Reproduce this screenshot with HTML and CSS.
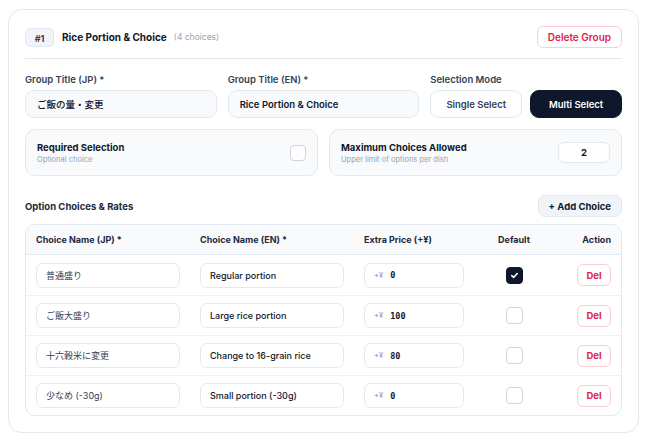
FILE: index.html
```html
<!DOCTYPE html>
<html lang="ja">
  <head>
    <meta charset="utf-8">
    <title>Option Group Editor</title>
    <link rel="stylesheet" href="styles.css">
  </head>
  <body>
    <div class="groupCard">

      <!-- group header -->
      <div class="groupHead">
        <div class="headLeft">
          <span class="badge">#1</span>
          <span class="groupName">Rice Portion &amp; Choice</span>
          <span class="groupCount">(4 choices)</span>
        </div>
        <button class="btnDanger">Delete Group</button>
      </div>

      <!-- titles + mode -->
      <div class="fieldRow">
        <div class="field">
          <label class="fieldLabel">Group Title (JP) *</label>
          <div class="textBox jpBold">ご飯の量・変更</div>
        </div>
        <div class="field">
          <label class="fieldLabel">Group Title (EN) *</label>
          <div class="textBox">Rice Portion &amp; Choice</div>
        </div>
        <div class="field">
          <label class="fieldLabel">Selection Mode</label>
          <div class="modeSwitch">
            <button class="modeBtn">Single Select</button>
            <button class="modeBtn active">Multi Select</button>
          </div>
        </div>
      </div>

      <div class="settingRow">
        <div class="settingCard">
          <div>
            <div class="settingTitle">Required Selection</div>
            <div class="settingSub">Optional choice</div>
          </div>
          <span class="check"></span>
        </div>
        <div class="settingCard">
          <div>
            <div class="settingTitle">Maximum Choices Allowed</div>
            <div class="settingSub">Upper limit of options per dish</div>
          </div>
          <div class="numBox">2</div>
        </div>
      </div>

      <div class="sectionHead">
        <span class="sectionTitle">Option Choices &amp; Rates</span>
        <button class="btnSoft">+ Add Choice</button>
      </div>

      <!-- choices table -->
      <div class="choiceTable">
        <div class="choiceRow headRow">
          <div class="cell">Choice Name (JP) *</div>
          <div class="cell">Choice Name (EN) *</div>
          <div class="cell">Extra Price (+¥)</div>
          <div class="cell center">Default</div>
          <div class="cell right">Action</div>
        </div>

        <div class="choiceRow">
          <div class="cell"><div class="cellBox jp">普通盛り</div></div>
          <div class="cell"><div class="cellBox">Regular portion</div></div>
          <div class="cell"><div class="cellBox price"><span class="yen">+¥</span><span class="amount">0</span></div></div>
          <div class="cell center"><span class="check big checked"><svg width="9" height="9" viewBox="0 0 10 10"><path d="M2 5.2l2 2 4-4.4" fill="none" stroke="#fff" stroke-width="1.8" stroke-linecap="round" stroke-linejoin="round"/></svg></span></div>
          <div class="cell right"><button class="btnDel">Del</button></div>
        </div>

        <div class="choiceRow">
          <div class="cell"><div class="cellBox jp">ご飯大盛り</div></div>
          <div class="cell"><div class="cellBox">Large rice portion</div></div>
          <div class="cell"><div class="cellBox price"><span class="yen">+¥</span><span class="amount">100</span></div></div>
          <div class="cell center"><span class="check big"></span></div>
          <div class="cell right"><button class="btnDel">Del</button></div>
        </div>

        <div class="choiceRow">
          <div class="cell"><div class="cellBox jp">十六穀米に変更</div></div>
          <div class="cell"><div class="cellBox">Change to 16-grain rice</div></div>
          <div class="cell"><div class="cellBox price"><span class="yen">+¥</span><span class="amount">80</span></div></div>
          <div class="cell center"><span class="check big"></span></div>
          <div class="cell right"><button class="btnDel">Del</button></div>
        </div>

        <div class="choiceRow">
          <div class="cell"><div class="cellBox jp">少なめ (-30g)</div></div>
          <div class="cell"><div class="cellBox">Small portion (-30g)</div></div>
          <div class="cell"><div class="cellBox price"><span class="yen">+¥</span><span class="amount">0</span></div></div>
          <div class="cell center"><span class="check big"></span></div>
          <div class="cell right"><button class="btnDel">Del</button></div>
        </div>
      </div>

    </div>
  </body>
</html>
```

FILE: styles.css
```css
body {
  margin: 9px 8px;
  background-color: #ffffff;
  font-family: Inter, "Noto Sans CJK JP", sans-serif;
  color: #0f172a;
}

button {
  font-family: inherit;
  cursor: pointer;
}

.groupCard {
  border: 1px solid #e2e8f0;
  border-radius: 14px;
  padding: 16px;
  box-shadow: 0 1px 2px rgba(15, 23, 42, 0.04);
}

/* header */

.groupHead {
  display: flex;
  align-items: center;
  justify-content: space-between;
  padding-bottom: 10px;
  border-bottom: 1px solid #e2e8f0;
}

.headLeft {
  display: flex;
  align-items: center;
}

.badge {
  display: inline-block;
  width: 29px;
  height: 19px;
  line-height: 19px;
  text-align: center;
  box-sizing: border-box;
  background-color: #f1f5f9;
  border: 1px solid #e2e8f0;
  border-radius: 5px;
  font-size: 9px;
  font-weight: 700;
  color: #334155;
  margin-right: 8px;
}

.groupName {
  font-size: 10px;
  font-weight: 700;
  color: #0f172a;
}

.groupCount {
  font-size: 8.5px;
  color: #94a3b8;
  margin-left: 7px;
}

.btnDanger {
  height: 22px;
  padding: 0 10px;
  background-color: #fff;
  border: 1px solid #fecdd3;
  border-radius: 6px;
  color: #e11d48;
  font-size: 10px;
  font-weight: 600;
}

/* fields */

.fieldRow {
  display: grid;
  grid-template-columns: 1fr 1fr 1fr;
  gap: 11px;
  margin-top: 15px;
}

.fieldLabel {
  display: block;
  font-size: 9.5px;
  font-weight: 600;
  color: #334155;
  margin-bottom: 4px;
  line-height: 12px;
}

.textBox {
  height: 28px;
  box-sizing: border-box;
  display: flex;
  align-items: center;
  padding: 0 11px;
  background-color: #f8fafc;
  border: 1px solid #e2e8f0;
  border-radius: 9px;
  font-size: 9.5px;
  font-weight: 600;
  color: #0f172a;
}

.jpBold {
  font-weight: 500;
}

.modeSwitch {
  display: flex;
  gap: 8px;
}

.modeBtn {
  flex: 1;
  height: 28px;
  background-color: #fff;
  border: 1px solid #e2e8f0;
  border-radius: 9px;
  font-size: 9.5px;
  font-weight: 600;
  color: #334155;
}

.modeBtn.active {
  background-color: #0f172a;
  border-color: #0f172a;
  color: #fff;
}

/* settings */

.settingRow {
  display: grid;
  grid-template-columns: 1fr 1fr;
  gap: 11px;
  margin-top: 11px;
}

.settingCard {
  height: 47px;
  box-sizing: border-box;
  display: flex;
  align-items: center;
  justify-content: space-between;
  padding: 0 11px;
  background-color: #f8fafc;
  border: 1px solid #e2e8f0;
  border-radius: 10px;
}

.settingTitle {
  font-size: 9.5px;
  font-weight: 700;
  color: #0f172a;
  line-height: 13px;
}

.settingSub {
  font-size: 7.5px;
  color: #94a3b8;
  line-height: 11px;
}

.check {
  display: inline-flex;
  align-items: center;
  justify-content: center;
  width: 16px;
  height: 16px;
  box-sizing: border-box;
  border: 1px solid #cbd5e1;
  border-radius: 4px;
  background-color: #fff;
}

.check.big {
  width: 17px;
  height: 17px;
}

.check.checked {
  background-color: #0f172a;
  border-color: #0f172a;
}

.numBox {
  width: 52px;
  height: 21px;
  box-sizing: border-box;
  line-height: 19px;
  text-align: center;
  background-color: #fff;
  border: 1px solid #e2e8f0;
  border-radius: 6px;
  font-size: 9.5px;
  font-weight: 700;
}

/* choices */

.sectionHead {
  display: flex;
  align-items: center;
  justify-content: space-between;
  margin-top: 19px;
}

.sectionTitle {
  font-size: 9.5px;
  font-weight: 700;
  color: #1e293b;
}

.btnSoft {
  height: 22px;
  padding: 0 10px;
  background-color: #f1f5f9;
  border: 1px solid #e2e8f0;
  border-radius: 7px;
  font-size: 9.5px;
  font-weight: 700;
  color: #0f172a;
}

.choiceTable {
  margin-top: 7px;
  border: 1px solid #e2e8f0;
  border-radius: 10px;
  overflow: hidden;
}

.choiceRow {
  display: grid;
  grid-template-columns: 164px 164px 120px 80px 1fr;
  align-items: center;
  height: 40px;
  box-sizing: border-box;
  border-top: 1px solid #eef2f6;
}

.headRow {
  height: 30px;
  border-top: none;
  background-color: #f8fafc;
  border-bottom: 1px solid #e2e8f0;
  font-size: 9px;
  font-weight: 700;
  color: #1e293b;
}

.headRow + .choiceRow {
  border-top: none;
}

.cell {
  padding: 0 10px;
  display: flex;
  align-items: center;
}

.cell.center {
  justify-content: center;
}

.cell.right {
  justify-content: flex-end;
}

.cellBox {
  flex: 1;
  height: 25px;
  box-sizing: border-box;
  display: flex;
  align-items: center;
  padding: 0 9px;
  background-color: #fff;
  border: 1px solid #e2e8f0;
  border-radius: 7px;
  font-size: 9px;
  font-weight: 500;
  color: #0f172a;
}

.cellBox.jp {
  font-weight: 400;
  color: #334155;
}

.yen {
  font-size: 7.5px;
  color: #94a3b8;
  margin-right: 7px;
}

.amount {
  font-family: "DejaVu Sans Mono", monospace;
  font-size: 8.5px;
  font-weight: 700;
  color: #0f172a;
}

.btnDel {
  width: 34px;
  height: 22px;
  padding: 0;
  background-color: #fff;
  border: 1px solid #fecdd3;
  border-radius: 6px;
  color: #e11d48;
  font-size: 9.5px;
  font-weight: 700;
}
```
